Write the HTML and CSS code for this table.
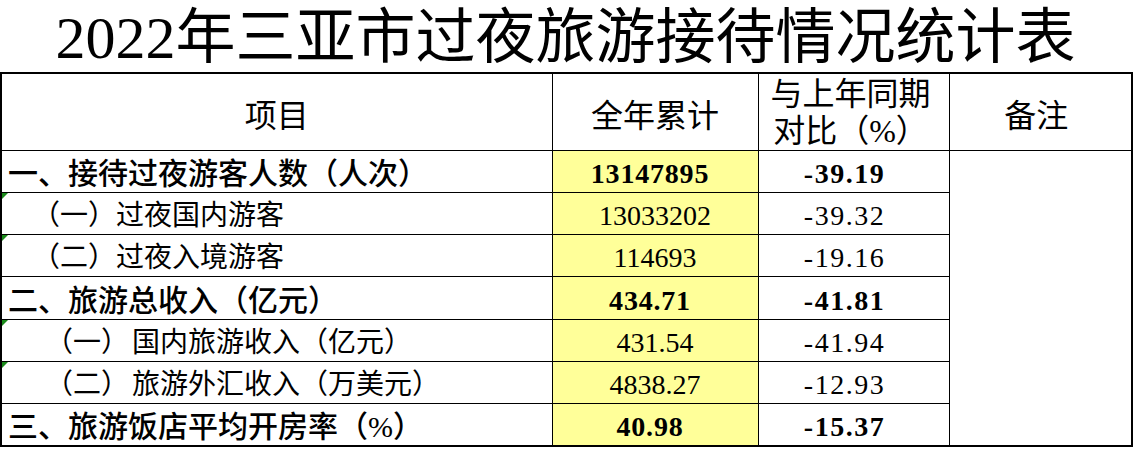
FILE: index.html
```html
<!DOCTYPE html>
<html lang="zh-CN">
<head>
<meta charset="utf-8">
<title>2022年三亚市过夜旅游接待情况统计表</title>
<link rel="stylesheet" href="styles.css">
</head>
<body>
<div class="sheet">
  <h1 class="title">2022年三亚市过夜旅游接待情况统计表</h1>
  <table class="stats">
    <colgroup>
      <col class="c-item">
      <col class="c-total">
      <col class="c-yoy">
      <col class="c-note">
    </colgroup>
    <thead>
      <tr class="head-row">
        <th class="h-item">项目</th>
        <th class="h-total">全年累计</th>
        <th class="h-yoy"><div class="yoy-label">与上年同期<br>对比（%）</div></th>
        <th class="h-note">备注</th>
      </tr>
    </thead>
    <tbody>
      <tr class="row main">
        <td class="item">一、接待过夜游客人数（人次）</td>
        <td class="total">13147895</td>
        <td class="yoy">-39.19</td>
        <td class="note" rowspan="7"></td>
      </tr>
      <tr class="row sub">
        <td class="item flag ind1">（一）过夜国内游客</td>
        <td class="total">13033202</td>
        <td class="yoy">-39.32</td>
      </tr>
      <tr class="row sub">
        <td class="item flag ind1">（二）过夜入境游客</td>
        <td class="total">114693</td>
        <td class="yoy">-19.16</td>
      </tr>
      <tr class="row main">
        <td class="item">二、旅游总收入（亿元）</td>
        <td class="total">434.71</td>
        <td class="yoy">-41.81</td>
      </tr>
      <tr class="row sub">
        <td class="item flag ind2">（一） 国内旅游收入（亿元）</td>
        <td class="total">431.54</td>
        <td class="yoy">-41.94</td>
      </tr>
      <tr class="row sub">
        <td class="item flag ind2">（二） 旅游外汇收入（万美元）</td>
        <td class="total">4838.27</td>
        <td class="yoy">-12.93</td>
      </tr>
      <tr class="row main">
        <td class="item">三、旅游饭店平均开房率（%）</td>
        <td class="total">40.98</td>
        <td class="yoy">-15.37</td>
      </tr>
    </tbody>
  </table>
</div>
</body>
</html>
```

FILE: styles.css
```css
html, body {
  margin: 0;
  padding: 0;
  background: #ffffff;
}

body {
  font-family: "Liberation Serif", "Noto Sans CJK SC", serif;
  color: #000000;
}

.sheet {
  width: 1131px;
}

.title {
  margin: 0;
  height: 72px;
  box-sizing: border-box;
  padding-top: 5px;
  font-size: 60px;
  line-height: 66px;
  font-weight: 400;
  text-align: center;
  white-space: nowrap;
}

.stats {
  width: 1131px;
  border-collapse: collapse;
  table-layout: fixed;
  border: 2px solid #000000;
}

.c-item { width: 551px; }
.c-total { width: 206px; }
.c-yoy { width: 191px; }
.c-note { width: 183px; }

.stats th,
.stats td {
  border: 1px solid #000000;
  padding: 0;
  white-space: nowrap;
}

.head-row th {
  height: 76px;
  font-size: 32px;
  font-weight: 400;
  text-align: center;
  vertical-align: middle;
  line-height: 36px;
  padding-top: 8px;
  box-sizing: border-box;
}

.head-row .h-note {
  padding-right: 8px;
}

.head-row .h-yoy {
  padding: 0 6px 0 0;
  vertical-align: top;
}

.yoy-label {
  height: 76px;
  box-sizing: border-box;
  padding-top: 2px;
  line-height: 37px;
}

.row td {
  height: 41.14px;
  vertical-align: bottom;
  line-height: 36px;
  padding-bottom: 0;
}

.row.main .item {
  font-size: 30px;
  font-weight: 500;
  padding-left: 6px;
}

.row.sub .item {
  font-size: 28px;
  font-weight: 400;
}

.item {
  text-align: left;
  position: relative;
}

.row .item.ind1 { padding-left: 30px; }
.row .item.ind2 {
  padding-left: 43px;
  word-spacing: -4px;
}

.total,
.yoy {
  font-size: 28px;
  text-align: center;
}

.row.main .total {
  font-weight: 700;
  letter-spacing: 0.8px;
  padding-right: 10px;
}

.row.main .yoy {
  font-weight: 700;
}

.total {
  background: #ffff99;
}

.row .yoy {
  letter-spacing: 1.5px;
  padding-right: 18px;
}

.note {
  background: #ffffff;
}

.flag::before {
  content: "";
  position: absolute;
  left: 0;
  top: 0;
  width: 0;
  height: 0;
  border-top: 6px solid #1a8a1a;
  border-right: 6px solid transparent;
}
```
